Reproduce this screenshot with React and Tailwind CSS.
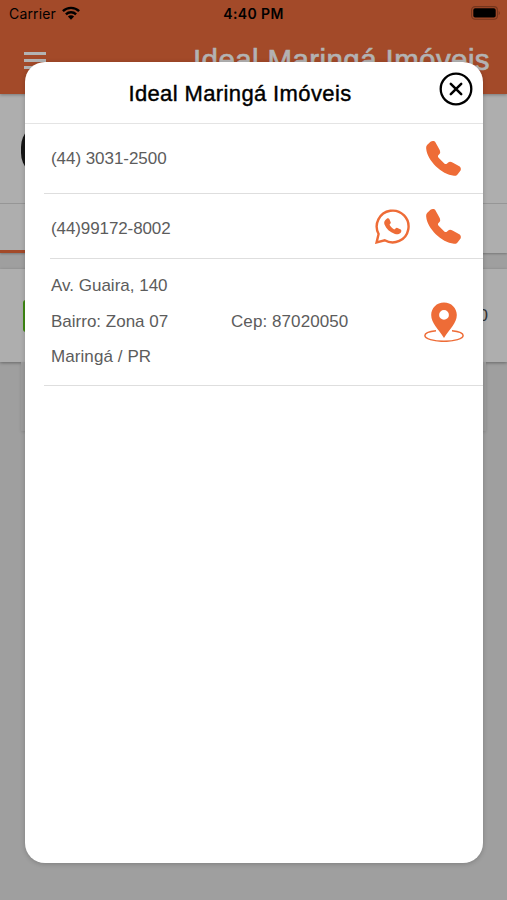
import React from "react";

const PhoneIcon = () => (
  <svg className="w-[35px] h-[35px] shrink-0" viewBox="0 0 35 35" fill="#ee6c37">
    <path d="M4.500.8C6-.2 8.300-.2 9.400 1.200L13.300 8.300C14.300 10.200 14.500 11.600 13.700 12.800L12.300 14.300C11.700 15.200 11.900 16 12.600 16.800L18.300 22.500C19.100 23.200 20 23.300 20.800 22.700L22.200 21.400C23.400 20.500 25 20.700 26.500 21.500L33.300 25.300C35 26.500 35.200 28.300 34.400 29.800L31.300 33.700C30.600 34.600 29.500 34.800 28 34.800C15.500 33.500 1.200 19.500.2 7.800C0 6 .5 4.700 1.300 3.800Z" />
  </svg>
);

const WhatsappIcon = () => (
  <svg className="w-[35px] h-[35px] shrink-0" viewBox="0 0 35 35" fill="none">
    <path
      d="M1.600 33.400L3.600 25A15.900 15.900 0 1 1 9.700 31.300Z"
      stroke="#ee6c37"
      strokeWidth="2.4"
      strokeLinejoin="miter"
    />
    <g transform="translate(9 9) scale(.5 .47)" fill="#ee6c37">
      <path d="M5.500 1.500C7 .2 9.500 0 10.600 2L13.600 9.600C14 11.200 11.400 13.300 11.200 14.600C12.500 18.500 16.500 22.300 20.600 24.300C22.300 23.700 24 20.300 25.800 20.600L33.500 24.400C35.600 26 34.700 30 32.900 31.800C30 34.700 26 35.200 22 33.900C11.500 30.600 4.500 23.300.8 13.500C-.6 9 1.200 4.500 5.500 1.500Z" />
    </g>
  </svg>
);

const PinIcon = () => (
  <svg className="w-10 h-10 shrink-0" viewBox="0 0 40 40" fill="none">
    <path
      d="M12 28.700C5 29.400.9 31.300.9 33.500C.9 36.800 9.400 39.300 20 39.300S39.100 36.800 39.100 33.500C39.100 31.300 35 29.400 28 28.700"
      stroke="#ee6c37"
      strokeWidth="1.500"
    />
    <path
      fill="#ee6c37"
      fillRule="evenodd"
      d="M20 .5C12.700.5 7.200 6 7.200 13.100C7.200 21 14.500 27.500 20 36C25.500 27.500 32.800 21 32.800 13.100C32.800 6 27.300.5 20 .5ZM20 8A4.900 4.900 0 1 1 20 17.800A4.900 4.900 0 1 1 20 8Z"
    />
  </svg>
);

const CloseIcon = () => (
  <svg className="w-[34px] h-[34px]" viewBox="0 0 34 34" fill="none" stroke="#000">
    <circle cx="17" cy="17" r="15.300" strokeWidth="2.300" />
    <path d="M11.800 11.800L22.200 22.200M22.200 11.800L11.800 22.200" strokeWidth="2.500" strokeLinecap="round" />
  </svg>
);

const StatusBar = () => (
  <div className="h-7 grid grid-cols-3 items-center pl-[9px] pr-[6px] text-black text-[14px]">
    <div className="flex items-center gap-[6px]">
      <span className="font-['Inter',sans-serif] leading-7 tracking-[0.15px]">Carrier</span>
      <svg className="w-[18px] h-[14px] -mt-[2px]" viewBox="0 0 18 14" fill="none" stroke="#000" strokeWidth="2.400">
        <path d="M.9 5.200A11.500 11.500 0 0 1 17.100 5.200" />
        <path d="M3.900 8.400A7.200 7.200 0 0 1 14.100 8.400" />
        <path d="M9 13.700L5.900 10.500A4.300 4.300 0 0 1 12.100 10.500Z" fill="#000" stroke="none" />
      </svg>
    </div>
    <span className="-ml-[3px] -mt-px text-center font-['Inter',sans-serif] font-semibold tracking-[0.4px]">4:40 PM</span>
    <div className="flex justify-end -mt-[2px]">
      <svg className="w-[30px] h-[14px]" viewBox="0 0 30 14">
        <rect x=".6" y=".6" width="25.800" height="12.600" rx="3.500" fill="none" stroke="#74351d" strokeWidth="1.100" />
        <rect x="2.300" y="2.300" width="22.400" height="9.200" rx="1.800" fill="#000" />
        <path d="M27.700 4.700Q30 7 27.700 9.300Z" fill="#74351d" />
      </svg>
    </div>
  </div>
);

const ContactModal = () => (
  <div className="absolute left-[25px] top-[62px] w-[457.500px] h-[801px] rounded-[20px] bg-white shadow-[0_1px_5px_rgba(0,0,0,0.2)]">
    <div className="h-[62px] flex items-center border-b border-[#e4e4e4] pr-[9.500px]">
      <h2 className="flex-1 pl-[16px] pt-px text-center text-[22px] text-black tracking-[0.38px] whitespace-nowrap [-webkit-text-stroke:0.4px_#000]">
        Ideal Maringá Imóveis
      </h2>
      <button className="-mt-2">
        <CloseIcon />
      </button>
    </div>
    <div className="text-[17px] text-[#5c5c5c]">
      <div className="ml-[19px] h-[70px] flex items-center justify-between pl-[7px] pr-[22px] border-b border-[#dedede]">
        <span className="tracking-[-0.05px]">(44) 3031-2500</span>
        <PhoneIcon />
      </div>
      <div className="ml-[25px] h-[65px] flex items-center pl-px pr-[22px] border-b border-[#dedede]">
        <span className="flex-1 pt-[5px] tracking-[-0.1px]">(44)99172-8002</span>
        <div className="flex gap-4">
          <WhatsappIcon />
          <PhoneIcon />
        </div>
      </div>
      <div className="ml-[19px] h-[127px] flex items-center pl-[7px] pr-[19px] border-b border-[#dedede]">
        <div className="flex-1 -mt-px leading-[35.500px]">
          <p>Av. Guaira, 140</p>
          <div className="flex">
            <p className="w-[180px]">Bairro: Zona 07</p>
            <p className="tracking-[0.08px]">Cep: 87020050</p>
          </div>
          <p className="tracking-[0.08px]">Maringá / PR</p>
        </div>
        <PinIcon />
      </div>
    </div>
  </div>
);

const App = () => {
  return (
    <div className="relative w-[507px] h-[900px] overflow-hidden bg-[#9f9f9f] font-['Liberation_Sans',Arial,sans-serif]">
      <header className="relative h-[94px] bg-[#a34a29] shadow-[0_1px_3px_rgba(0,0,0,0.3)]">
        <StatusBar />
        <div className="h-[66px] flex items-center justify-between pl-6 pr-[17px] pb-1">
          <div className="w-[22px] mt-[2px] flex flex-col gap-1">
            <span className="h-[3px] bg-[#b3b3b3]" />
            <span className="h-[3px] bg-[#b3b3b3]" />
            <span className="h-[3px] bg-[#b3b3b3]" />
          </div>
          <h1 className="pt-px text-[29.500px] leading-none tracking-[0.4px] text-[#b3b3b3] whitespace-nowrap [-webkit-text-stroke:0.7px_#b3b3b3]">
            Ideal Maringá Imóveis
          </h1>
        </div>
      </header>
      <section className="h-[159px] bg-[#aeaeae] flex flex-col shadow-[0_1px_2px_rgba(0,0,0,0.25)]">
        <div className="h-[110px] pt-[28px] pl-[21px] border-b border-[#969696]">
          <div className="w-14 h-[56px] rounded-[25px] bg-[#151515]" />
        </div>
        <div className="flex-1 flex items-end">
          <div className="w-1/2 h-[3px] bg-[#a34a29]" />
        </div>
      </section>
      <section className="mt-4 h-[93px] bg-[#aeaeae] flex items-center justify-between pl-[23px] pr-[19px] shadow-[0_1px_3px_rgba(0,0,0,0.35)]">
        <div className="w-10 h-8 rounded-[3px] bg-[#3f8a12]" />
        <span className="text-[17px] text-[#333]">0</span>
      </section>
      <section className="mx-[21px] h-[69px] bg-[#9c9c9c] shadow-[0_1px_3px_rgba(0,0,0,0.12)]" />
      <ContactModal />
    </div>
  );
};

export default App;
